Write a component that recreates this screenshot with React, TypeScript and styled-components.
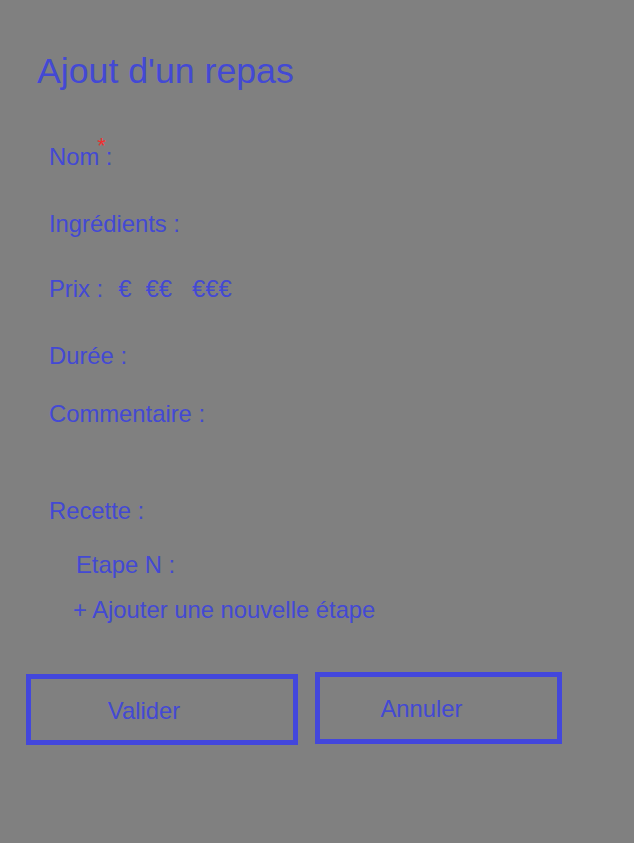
import React from "react";
import styled, { createGlobalStyle } from "styled-components";

const Global = createGlobalStyle`
  html, body { margin: 0; padding: 0; background: #808080; }
  body { font-family: "Liberation Sans", Arial, sans-serif; color: #4349d4; }
  * { box-sizing: border-box; }
`;

const Page = styled.div`
  min-height: 843px;
  padding: 50px 0 0 0;
`;

const Title = styled.h1`
  margin: 0 0 0 37px;
  font-size: 35.7px;
  line-height: 42px;
  font-weight: 400;
`;

const Form = styled.form`
  margin-top: 51px;
  display: flex;
  flex-direction: column;
`;

const Row = styled.div<{ $h: number; $indent?: number }>`
  height: ${(p) => p.$h}px;
  padding-left: ${(p) => p.$indent ?? 49}px;
  font-size: 23.8px;
  line-height: 28px;
  display: flex;
  align-items: flex-start;
  white-space: pre;
`;

const Required = styled.span`
  position: relative;
`;

const Star = styled.span`
  position: absolute;
  left: calc(100% - 2px);
  top: -8px;
  font-size: 22px;
  line-height: 22px;
  color: #f03030;
`;

const Price = styled.span<{ $ml: number }>`
  margin-left: ${(p) => p.$ml}px;
  cursor: pointer;
`;

const Buttons = styled.div`
  display: flex;
  align-items: flex-start;
  gap: 17px;
  margin-top: 48px;
  padding-left: 26px;
`;

const Button = styled.button<{ $w: number; $h: number; $mt?: number; $pr: number }>`
  width: ${(p) => p.$w}px;
  height: ${(p) => p.$h}px;
  margin-top: ${(p) => p.$mt ?? 0}px;
  border: 5px solid #4347dc;
  background: transparent;
  color: #4349d4;
  font-family: "Liberation Sans", Arial, sans-serif;
  font-size: 23.8px;
  padding: 2px ${(p) => p.$pr}px 0 0;
  text-align: center;
  cursor: pointer;
`;

export default function App() {
  return (
    <>
      <Global />
      <Page>
        <Title>Ajout d'un repas</Title>
        <Form onSubmit={(e) => e.preventDefault()}>
          <Row $h={67}>
            <Required>
              Nom<Star>*</Star>
            </Required>
            {" :"}
          </Row>
          <Row $h={65}>Ingrédients :</Row>
          <Row $h={67}>
            Prix :<Price $ml={15}>€</Price>
            <Price $ml={14}>€€</Price>
            <Price $ml={20}>€€€</Price>
          </Row>
          <Row $h={58}>Durée :</Row>
          <Row $h={97}>Commentaire :</Row>
          <Row $h={54}>Recette :</Row>
          <Row $h={45} $indent={76}>Etape N :</Row>
          <Row $h={28} $indent={73}>+ Ajouter une nouvelle étape</Row>
          <Buttons>
            <Button type="submit" $w={272} $h={71} $mt={2} $pr={36}>
              Valider
            </Button>
            <Button type="button" $w={247} $h={72} $pr={34}>
              Annuler
            </Button>
          </Buttons>
        </Form>
      </Page>
    </>
  );
}
